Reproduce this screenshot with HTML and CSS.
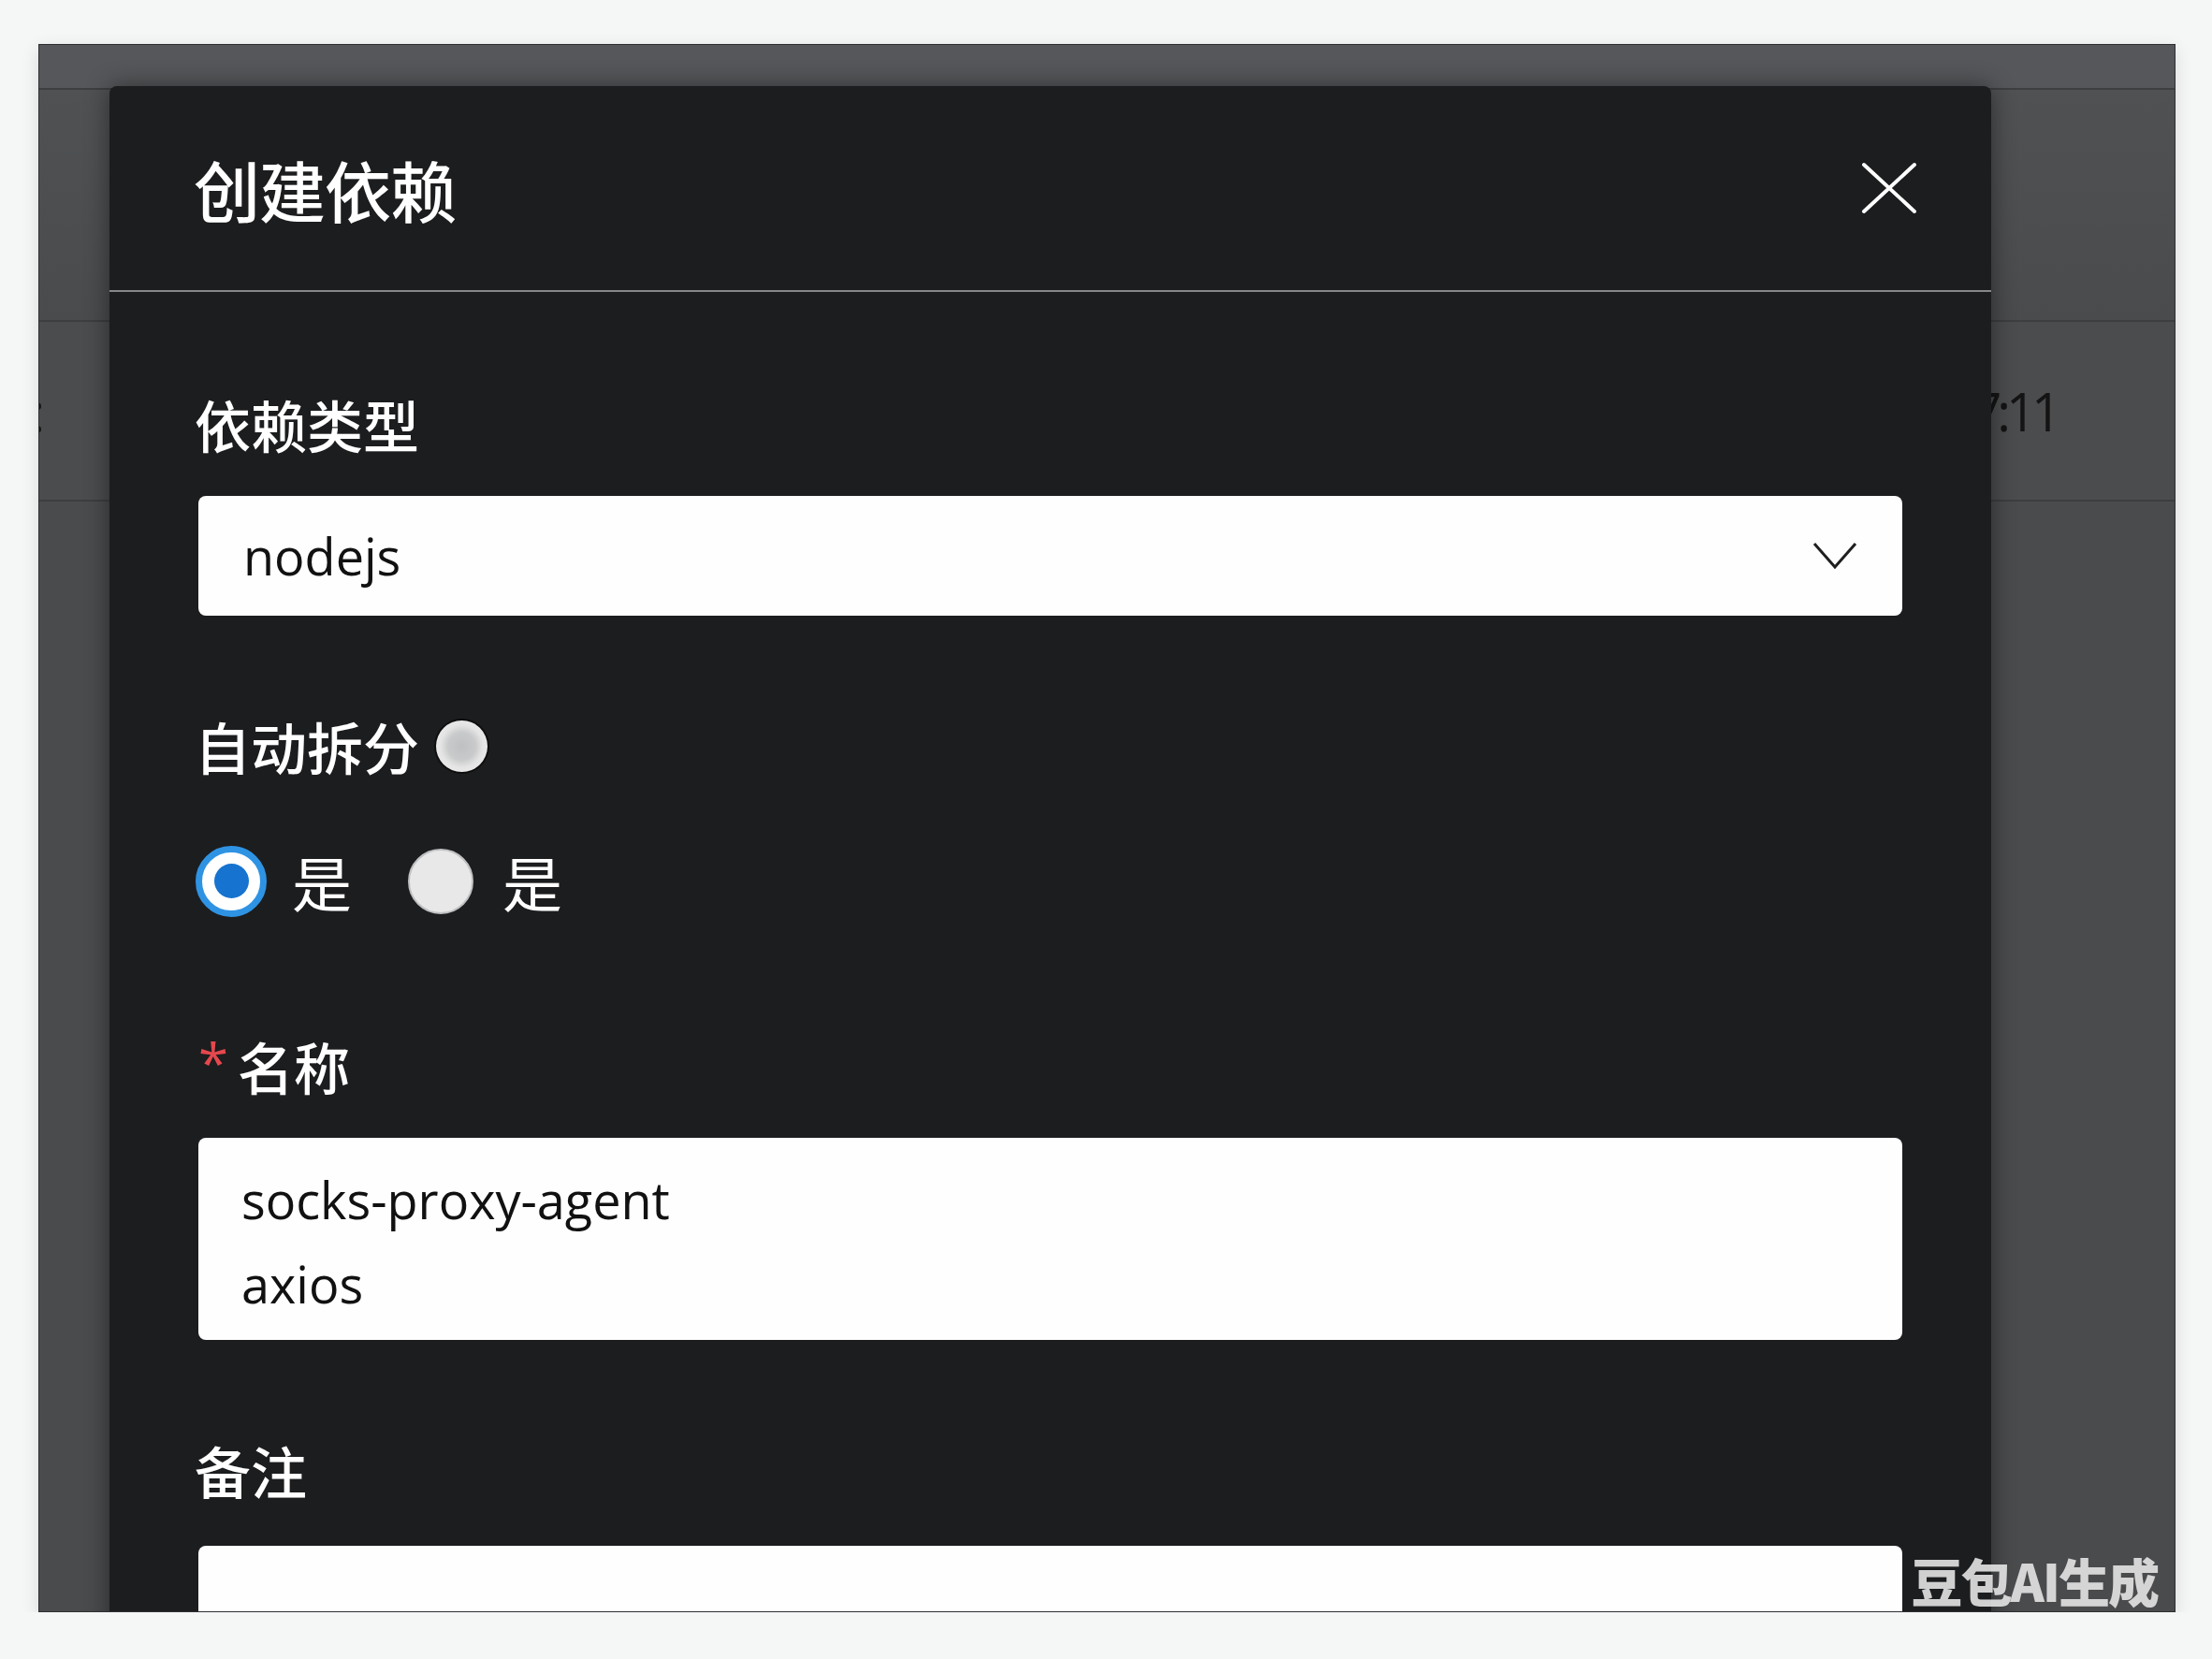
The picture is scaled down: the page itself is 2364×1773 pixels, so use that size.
FILE: index.html
```html
<!DOCTYPE html>
<html lang="zh-CN">
<head>
  <meta charset="UTF-8" />
  <title>创建依赖</title>
  <link rel="stylesheet" href="styles.css">
</head>
<body>
  <div class="screen">
    <div class="bg-head"></div>
    <div class="bg-row tall"></div>
    <div class="bg-row">
      <span class="bg-cut">:</span>
      <span class="bg-time">17:11</span>
    </div>
    <div class="bg-row rest"></div>

    <div class="modal">
      <div class="modal-header">
        <h2 class="modal-title">创建依赖</h2>
        <button class="modal-close" aria-label="关闭">
          <svg width="60" height="56" viewBox="0 0 60 56">
            <path d="M3 3 L57 53 M57 3 L3 53" stroke="#fff" stroke-width="4" stroke-linecap="round" fill="none"/>
          </svg>
        </button>
      </div>

      <div class="modal-body">
        <div class="field">
          <label class="field-label">依赖类型</label>
          <div class="select">
            <span>nodejs</span>
            <svg width="48" height="30" viewBox="0 0 48 30">
              <path d="M2 2 L24 27 L46 2" stroke="#1f1f1f" stroke-width="3" fill="none"/>
            </svg>
          </div>
        </div>

        <div class="field">
          <label class="field-label">自动拆分<span class="help-dot"></span></label>
          <div class="radio-group">
            <label class="radio"><span class="radio-btn checked"></span>是</label>
            <label class="radio"><span class="radio-btn"></span>是</label>
          </div>
        </div>

        <div class="field">
          <label class="field-label"><span class="required">*</span>名称</label>
          <textarea class="textarea" rows="2">socks-proxy-agent
axios</textarea>
        </div>

        <div class="field">
          <label class="field-label">备注</label>
          <textarea class="textarea remark" rows="2"></textarea>
        </div>
      </div>
    </div>

    <div class="watermark">豆包AI生成</div>
  </div>
</body>
</html>
```

FILE: styles.css
```css
* { margin: 0; padding: 0; box-sizing: border-box; }
body {
  font-family: "Open Sans", "Noto Sans CJK SC", sans-serif;
  background: #f5f6f6;
  color: #fff;
}
.screen {
  position: relative;
  margin: 47px 0 0 41px;
  width: 2284px;
  height: 1676px;
  overflow: hidden;
  background: #4a4b4d;
  border: 1px solid #2f3032;
  box-shadow: 0 6px 18px rgba(0,0,0,0.12);
}
.bg-head {
  height: 48px;
  background: #55575a;
  border-bottom: 2px solid #3d3e40;
}
.bg-row {
  height: 192px;
  display: flex;
  align-items: center;
  justify-content: space-between;
  border-bottom: 2px solid #3d3e40;
  background: #4b4c4e;
}
.bg-row.tall {
  height: 248px;
  background: linear-gradient(#4f5153, #4a4b4d);
}
.bg-row.rest {
  height: auto;
  border-bottom: none;
}
.bg-cut {
  margin-left: -9px;
  font-size: 58px;
  color: #141414;
}
.bg-time {
  margin-right: 126px;
  font-size: 56px;
  letter-spacing: -5px;
  color: #141414;
}
.modal {
  position: absolute;
  top: 44px;
  left: 75px;
  width: 2011px;
  background: #1c1d1f;
  border-radius: 8px 8px 0 0;
  box-shadow: 0 0 26px rgba(0,0,0,0.45);
}
.modal-header {
  height: 220px;
  display: flex;
  align-items: center;
  justify-content: space-between;
  padding: 0 79px 0 90px;
  border-bottom: 2px solid #85878a;
}
.modal-title {
  font-size: 71px;
  font-weight: 500;
  color: #fff;
  letter-spacing: -1px;
}
.modal-close {
  background: none;
  border: none;
  display: flex;
  cursor: pointer;
}
.modal-body {
  padding: 98px 95px 0;
}
.field + .field {
  margin-top: 96px;
}
.field-label {
  display: flex;
  align-items: center;
  height: 86px;
  margin: 0 0 34px -4px;
  font-size: 60px;
  font-weight: 500;
  color: #fff;
}
.help-dot {
  width: 55px;
  height: 55px;
  margin-left: 18px;
  border-radius: 50%;
  background: radial-gradient(circle, #bfc0c1 0, #c9cacb 38%, #e4e4e4 58%, #f1f1f1 100%);
  box-shadow: 0 0 0 2px #0e0e0e;
}
.required {
  color: #e5484d;
  font-family: "Open Sans", sans-serif;
  font-size: 58px;
  margin: 0 10px 0 4px;
  align-self: flex-start;
  line-height: 80px;
}
.select {
  height: 128px;
  display: flex;
  align-items: center;
  justify-content: space-between;
  padding: 0 48px 0 48px;
  background: #fefefe;
  border-radius: 8px;
  color: #111;
  font-size: 54px;
}
.radio-group {
  display: flex;
  align-items: center;
  margin: 55px 0 0 -3px;
  padding-bottom: 12px;
}
.radio {
  display: flex;
  align-items: center;
  font-size: 64px;
  color: #fff;
  margin-right: 60px;
}
.radio-btn {
  width: 70px;
  height: 70px;
  margin-right: 31px;
  border-radius: 50%;
  background: #e8e8e9;
  border: 2px solid #bfc0c1;
}
.radio-btn.checked {
  width: 76px;
  height: 76px;
  margin-right: 27px;
  display: flex;
  align-items: center;
  justify-content: center;
  background: #fff;
  border: 7px solid #2f93e3;
}
.radio-btn.checked::after {
  content: "";
  width: 37px;
  height: 37px;
  border-radius: 50%;
  background: #1673cf;
}
.textarea {
  display: block;
  width: 100%;
  height: 216px;
  padding: 21px 46px 0;
  border: none;
  border-radius: 8px;
  background: #fefefe;
  color: #111;
  font-family: "Open Sans", sans-serif;
  font-size: 54px;
  line-height: 90px;
  resize: none;
  overflow: hidden;
  outline: none;
}
.field:last-child .field-label {
  margin-bottom: 38px;
}
.textarea.remark {
  height: 160px;
}
.watermark {
  position: absolute;
  right: 18px;
  bottom: 4px;
  font-family: "Noto Sans CJK SC", sans-serif;
  font-weight: 900;
  font-size: 55px;
  line-height: 60px;
  letter-spacing: -2px;
  color: rgba(228,228,228,0.9);
}
```
